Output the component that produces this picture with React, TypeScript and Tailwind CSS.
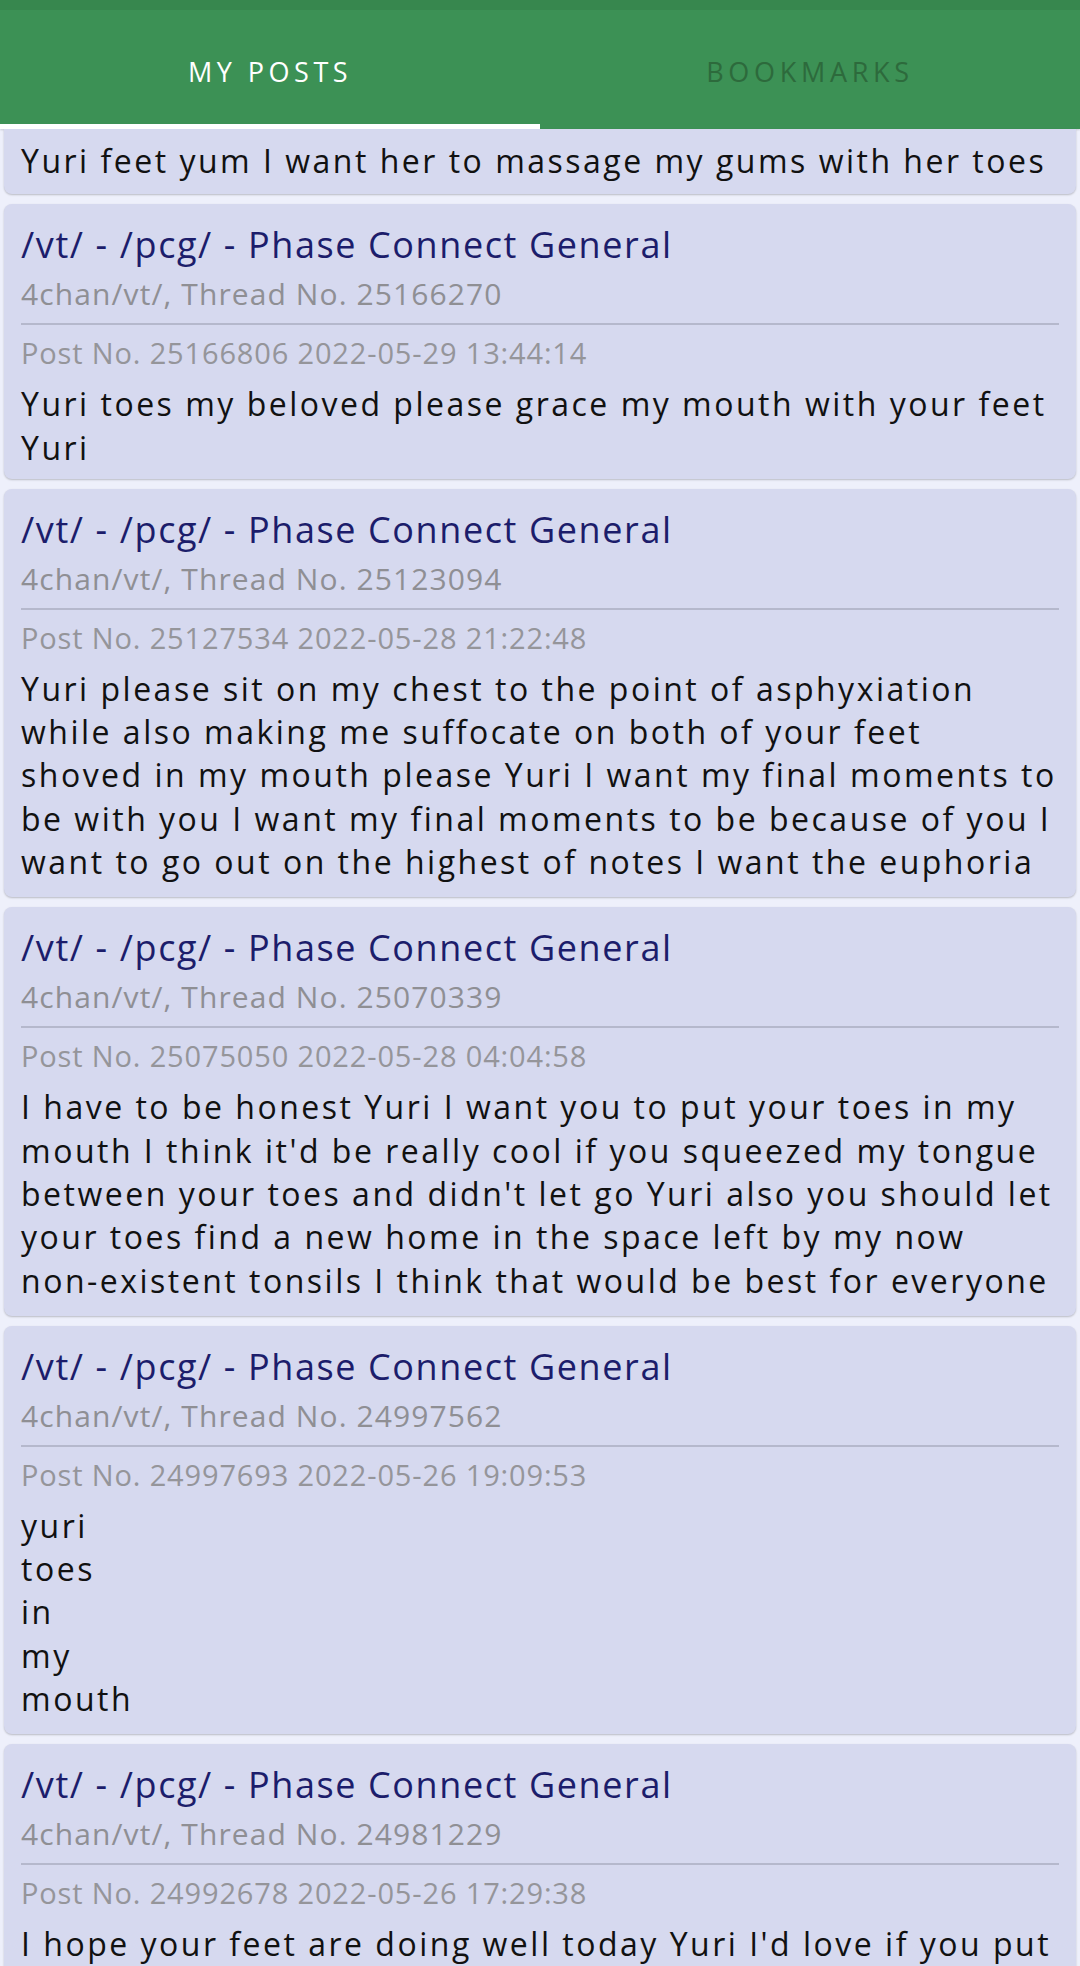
type Post = {
  thread: string;
  post: string;
  lines: string[];
  short?: boolean;
};

const posts: Post[] = [
  {
    thread: "25166270",
    post: "25166806 2022-05-29 13:44:14",
    lines: ["Yuri toes my beloved please grace my mouth with your feet", "Yuri"],
    short: true,
  },
  {
    thread: "25123094",
    post: "25127534 2022-05-28 21:22:48",
    lines: [
      "Yuri please sit on my chest to the point of asphyxiation",
      "while also making me suffocate on both of your feet",
      "shoved in my mouth please Yuri I want my final moments to",
      "be with you I want my final moments to be because of you I",
      "want to go out on the highest of notes I want the euphoria",
    ],
  },
  {
    thread: "25070339",
    post: "25075050 2022-05-28 04:04:58",
    lines: [
      "I have to be honest Yuri I want you to put your toes in my",
      "mouth I think it'd be really cool if you squeezed my tongue",
      "between your toes and didn't let go Yuri also you should let",
      "your toes find a new home in the space left by my now",
      "non-existent tonsils I think that would be best for everyone",
    ],
  },
  {
    thread: "24997562",
    post: "24997693 2022-05-26 19:09:53",
    lines: ["yuri", "toes", "in", "my", "mouth"],
  },
  {
    thread: "24981229",
    post: "24992678 2022-05-26 17:29:38",
    lines: ["I hope your feet are doing well today Yuri I'd love if you put", "", "", ""],
  },
];

function Body({ lines }: { lines: string[] }) {
  return (
    <div className="text-[32px] leading-[43.3px] tracking-[2.5px] text-[#111111]">
      {lines.map((l, i) => (
        <div key={i} className="whitespace-nowrap h-[43.3px]">
          {l}
        </div>
      ))}
    </div>
  );
}

function PostCard({ p }: { p: Post }) {
  return (
    <div
      className={
        "mx-[4px] mb-[10px] rounded-[8px] bg-[#d6d9ef] px-[17px] pt-[17px] shadow-[0_1px_2px_rgba(0,0,0,0.22)] " +
        (p.short ? "pb-[10px]" : "pb-[14px]")
      }
    >
      <div className="text-[36px] leading-[48px] tracking-[1.6px] text-[#1c1d6b] whitespace-nowrap">
        /vt/ - /pcg/ - Phase Connect General
      </div>
      <div className="text-[30px] leading-[50px] tracking-[1.1px] text-[#8f8f94] whitespace-nowrap">
        4chan/vt/, Thread No. {p.thread}
      </div>
      <div className="mt-[4px] h-[2px] bg-[#b5b8cc]" />
      <div className="mt-[8px] text-[29px] leading-[40px] tracking-[0.85px] text-[#95959a] whitespace-nowrap">
        Post No. {p.post}
      </div>
      <div className="mt-[9px]">
        <Body lines={p.lines} />
      </div>
    </div>
  );
}

export default function App() {
  return (
    <div className="h-[1966px] w-[1080px] overflow-hidden bg-[#eef0fb] font-['Open_Sans',sans-serif]">
      <div className="bg-[#3c9155] shadow-[0_1px_2px_rgba(0,0,0,0.15)]">
        <div className="h-[10px] bg-[#37874e]" />
        <div className="flex h-[119px]">
          <div className="flex flex-1 flex-col">
            <div className="flex flex-1 items-center justify-center pt-[10px] text-[27px] tracking-[4.5px] text-white">
              MY POSTS
            </div>
            <div className="h-[5px] bg-white" />
          </div>
          <div className="flex flex-1 flex-col">
            <div className="flex flex-1 items-center justify-center pt-[10px] text-[27px] tracking-[4.7px] text-[#2d6a3c]">
              BOOKMARKS
            </div>
            <div className="h-[5px]" />
          </div>
        </div>
      </div>

      <div className="mx-[4px] mb-[10px] rounded-b-[8px] bg-[#d6d9ef] px-[17px] pt-[10px] pb-[12px] shadow-[0_1px_2px_rgba(0,0,0,0.22)]">
        <Body lines={["Yuri feet yum I want her to massage my gums with her toes"]} />
      </div>

      {posts.map((p) => (
        <PostCard key={p.post} p={p} />
      ))}
    </div>
  );
}
